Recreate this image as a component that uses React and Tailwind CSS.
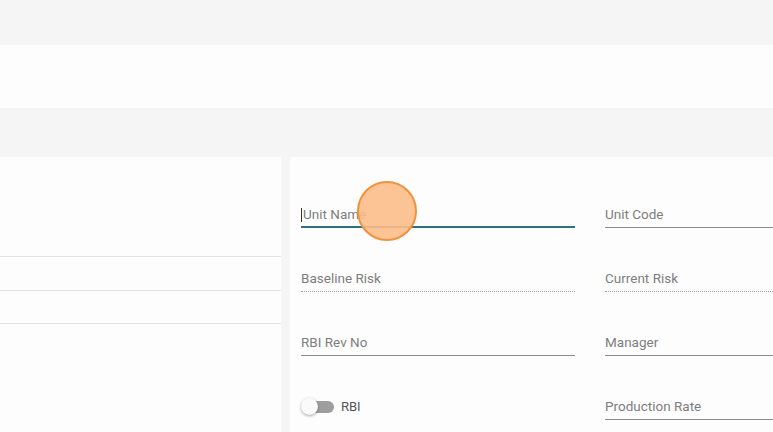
import React from "react";

const font = { fontFamily: "Roboto, 'Noto Sans', sans-serif" };

function Field({ label, variant = "solid", focused = false }) {
  const line = focused
    ? "border-b-2 border-[#2a7280] pb-[3px]"
    : variant === "dotted"
    ? "border-b border-dotted border-[#9e9e9e] pb-[4px]"
    : "border-b border-[#8c8c8c] pb-[4px]";
  return (
    <div className={`flex items-center h-[17px] box-content ${line}`}>
      {focused && <span className="w-px h-[14px] bg-[#333] mr-px" />}
      <span className="text-[13.5px] leading-[17px] text-[#7d7d7d]">{label}</span>
    </div>
  );
}

function Toggle({ label }) {
  return (
    <div className="flex items-center h-[17px] pb-[4px] box-content">
      <div className="relative w-[34px] h-[17px] flex items-center">
        <div className="ml-[4px] w-[29px] h-[12px] rounded-full bg-[#9e9e9e]" />
        <div className="absolute left-0 top-0 w-[17px] h-[17px] rounded-full bg-[#fafafa] shadow-[0_1px_3px_rgba(0,0,0,0.35)]" />
      </div>
      <span className="ml-[6px] text-[13px] leading-4 text-[#555]">{label}</span>
    </div>
  );
}

export default function App() {
  return (
    <div className="relative w-[773px] h-[432px] overflow-hidden bg-[#f5f5f5]" style={font}>
      <div className="h-[45px] bg-[#f5f5f5]" />
      <div className="h-[63px] bg-[#fdfdfd]" />
      <div className="h-[49px] bg-[#f5f5f5]" />

      <div className="flex h-[275px]">
        {/* left list panel */}
        <div className="w-[281px] shrink-0 bg-[#fdfdfd] flex flex-col">
          <div className="h-[100px] border-b border-[#e3e3e3]" />
          <div className="h-[34px] border-b border-[#e3e3e3]" />
          <div className="h-[33px] border-b border-[#e3e3e3]" />
        </div>
        <div className="w-[9px] shrink-0" />

        {/* unit form */}
        <div className="flex-1 min-w-0 bg-[#fdfdfd] pl-[11px] pt-[49px]">
          <div className="grid grid-cols-[274px_274px] gap-x-[30px] gap-y-[42px]">
            <Field label="Unit Name" focused />
            <Field label="Unit Code" />
            <Field label="Baseline Risk" variant="dotted" />
            <Field label="Current Risk" variant="dotted" />
            <Field label="RBI Rev No" />
            <Field label="Manager" />
            <Toggle label="RBI" />
            <Field label="Production Rate" />
          </div>
        </div>
      </div>

      {/* click indicator */}
      <div className="absolute left-[357px] top-[181px] w-[60px] h-[60px] rounded-full border-2 border-[#f0913c] bg-[#fcbd88]/90 pointer-events-none" />
    </div>
  );
}
